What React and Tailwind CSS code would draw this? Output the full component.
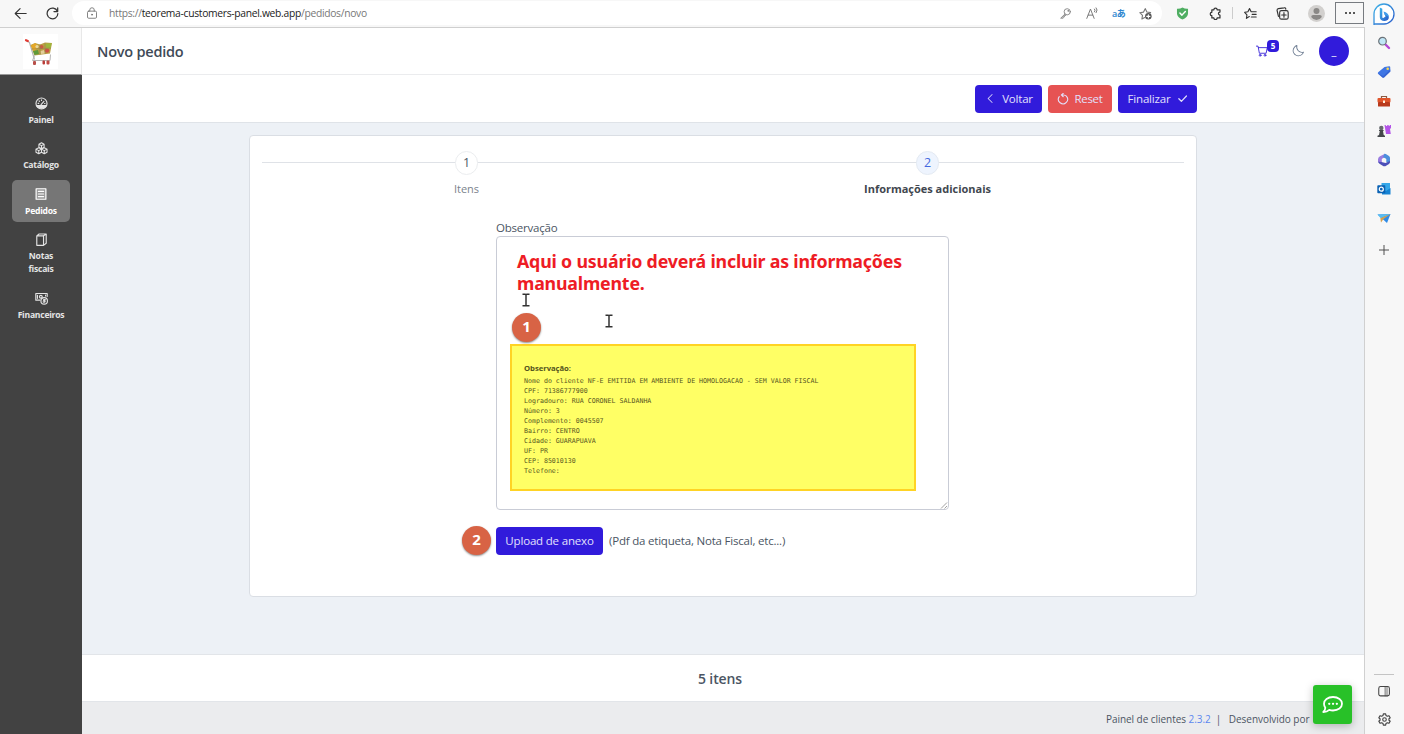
import React from "react";
import { PiMoon, PiCaretLeft } from "react-icons/pi";

const S = ({ size = 14, box = 16, sw = 1.2, className = "", children }) => (
  <svg width={size} height={size} viewBox={`0 0 ${box} ${box}`} fill="none" stroke="currentColor" strokeWidth={sw} strokeLinecap="round" strokeLinejoin="round" className={`shrink-0 ${className}`}>
    {children}
  </svg>
);

const BackIcon = () => <S size={13} sw={1.4}><path d="M15 8H1.5M7.5 2 1.5 8l6 6" /></S>;
const ReloadIcon = () => <S size={13} sw={1.5}><path d="M14 5.2A6.6 6.6 0 1 0 14.6 8M14.4 1v4.6H9.8" /></S>;
const LockIcon = () => <S size={12} sw={1.2}><rect x="2" y="5.5" width="12" height="9.5" rx="1.6" /><path d="M5 5.500V4a3 3 0 0 1 6 0v1.500" /><circle cx="8" cy="10.200" r=".7" fill="currentColor" /></S>;
const KeyIcon = () => <S size={11}><circle cx="10.500" cy="5.500" r="4.500" /><path d="M7.200 8.700 1 14.800h3.500v-2h2v-2h1.800" /><circle cx="11.800" cy="4.200" r=".6" /></S>;
const ReadIcon = () => <S size={13}><path d="M1 14 5.500 2.500 10 14M2.700 10h5.600M10.500 2.500q1.500 1.500 0 3.500M12.500 1q2.500 2.500 0 6" /></S>;
const StarAddIcon = () => <S size={13} sw={1.4}><path d="M7 13 3.600 14.800l.7-4.500L1 7l4.600-.7L7.700 2l2 4.200 4.600.7" /><circle cx="11.500" cy="11.500" r="4" fill="#555" stroke="none" /><path d="M11.500 9.500v4M9.500 11.500h4" stroke="#fff" /></S>;
const ShieldIcon = () => <S size={13} sw={1.8}><path d="M8 .5Q11 2.300 14.800 2v5.500c0 4-3 6.500-6.800 8-3.800-1.500-6.800-4-6.800-8V2Q5 2.300 8 .5z" fill="#4fae62" stroke="none" /><path d="m4.800 7.500 2.500 2.500 4.200-4.500" stroke="#fff" /></S>;
const PuzzleIcon = () => <S size={13} sw={1.500}><path d="M3.500 3.500H6a2 2 0 0 1 4 0h3.500V6.200a1.900 1.900 0 0 0 0 3.800v3.500H10a2 2 0 0 1-4 0H3.500V10.500a2 2 0 0 1 0-4z" /></S>;
const FavIcon = () => <S size={13} sw={1.4}><path d="M6.500 11.800 3 14l.6-4.300L.8 6.600l4-.7L6.800 2l2 3.900H15M10 9h5M9 12.300h6" /></S>;
const CollectIcon = () => <S size={13} sw={1.4}><path d="M3 11.500 1.300 4A2 2 0 0 1 3 2l7-1a1.500 1.500 0 0 1 2 1.600" /><rect x="4.500" y="4.500" width="10.500" height="10.500" rx="2.200" /><path d="M9.800 7v5.500M7 9.800h5.500" /></S>;
const ResetIcon = () => <S size={12} sw={1.4}><path d="M3 4.800A6.100 6.100 0 1 0 12.500 4.200Q11 2.800 8.800 2.600H5.800M8.300.6 5.800 2.600l2.500 2.400" /></S>;

const Bing = () => (
  <svg width="22" height="23" viewBox="0 0 22 23" className="shrink-0">
    <defs>
      <linearGradient id="bg1" x1="0" y1="0" x2="1" y2="1"><stop offset="0" stopColor="#3fb4e8" /><stop offset="1" stopColor="#2859c9" /></linearGradient>
    </defs>
    <path d="M1 22V11a10 10 0 1 1 10 10H1z" fill="#fff" stroke="url(#bg1)" strokeWidth="1.300" />
    <path d="M6.800 4.500 9.300 5.700V14q0 1.600 1.400.8l1.800-1.200-1-2.800q3.800.5 4.300 3.200.3 3.500-4 4-4.500.2-5-3.800z" fill="url(#bg1)" />
    <path d="M10.500 8.500q5 1.200 5.500 5.500-2.500-2-4.500-2.300z" fill="#3f9bea" />
  </svg>
);

const SideIcons = [
  <svg width="14" height="14" viewBox="0 0 14 14"><path d="m8.500 8.500 3.500 3.500" stroke="#b348d6" strokeWidth="2.400" strokeLinecap="round" /><circle cx="5.500" cy="5.200" r="3.800" fill="#bfe6f7" stroke="#6b7278" strokeWidth="1.200" /></svg>,
  <svg width="14" height="14" viewBox="0 0 14 14"><path d="M7.500 2 12.300 1.200q.9 0 .9.900l.2 4.400-6.300 6q-.9.700-1.700 0L1 8.800q-.5-.8.200-1.500z" fill="#3f76e4" /><path d="m1 8.500 4.500 4q.8.700 1.600 0l6.300-6-.1-2L6.200 11z" fill="#2b52c4" opacity=".5" /><circle cx="10.700" cy="3.800" r="1.300" fill="#ffd94a" /></svg>,
  <svg width="14" height="14" viewBox="0 0 14 14"><path d="M4.500 4.500V2.500h5v2" fill="none" stroke="#8d5a42" strokeWidth="1.200" /><rect x=".5" y="4" width="13" height="4.500" rx="1" fill="#e0552b" /><rect x="1" y="8" width="12" height="4.500" rx=".6" fill="#b93a1c" /><rect x="6" y="6.500" width="2" height="2.500" fill="#fff1dd" /></svg>,
  <svg width="14" height="14" viewBox="0 0 14 14"><path d="M7.500 1h1.300v1h1.400V1h1.500v1h1V1H14v3l-1 1 .8 5H9z" fill="#b455e8" /><circle cx="4.300" cy="4" r="2.200" fill="#66696d" /><path d="M2 6h4.600v1H6l.7 4 1.300.8V13H.5v-1.200L2 11l.8-4H2z" fill="#45484b" /></svg>,
  <svg width="14" height="14" viewBox="0 0 14 14"><path d="M8 .7 3 3.300a3.500 3.500 0 0 0-2 3V9l3.800.500V6l4.200-2.500z" fill="#9a7ce0" /><path d="M7.500 .7q1.500 0 2.500 1l2 1.300q1 .8 1 2v4.500l-3.700-.300V6L6 4z" fill="#4b8fdc" /><path d="m1 8.800q.3 1.200 1.500 2l4 2.500q1.500.3 3-.8l2.500-1.500q1.300-1 1-3L8.500 10 4.500 9z" fill="#4c4fb8" /><circle cx="7" cy="7.200" r="1.900" fill="#f7f7f7" /></svg>,
  <svg width="14" height="14" viewBox="0 0 14 14"><rect x="4.500" y="1" width="8.500" height="8" fill="#35a7e8" /><path d="M5 6.500 9 9l4.500-3v6.500H5z" fill="#1683d4" /><rect x=".3" y="3.200" width="8" height="8" rx=".8" fill="#0a62b4" /><circle cx="4.300" cy="7.200" r="2" fill="none" stroke="#fff" strokeWidth="1.200" /></svg>,
  <svg width="14" height="14" viewBox="0 0 14 14"><path d="M.5 3.500 13.500 3l-3.500 9-3.300-3z" fill="#2f8be6" /><path d="M.5 3.500 13.500 3 3.800 7.200z" fill="#57bdf2" /><path d="M13.500 3 3.300 7.200l.7 4.300L6.500 8z" fill="#d9a04a" /></svg>,
];

const CartLogo = () => (
  <svg width="35" height="35" viewBox="0 0 35 35" className="bg-white">
    <path d="M3 6.500 6.500 8.500 11.500 25.500" fill="none" stroke="#b5b5b5" strokeWidth="1.200" />
    <path d="M3 6.200 4.800 7" stroke="#e23a32" strokeWidth="2.200" strokeLinecap="round" />
    <path d="M7.500 11 12 9l5 1.500 5-2 7 .5-2 10.500-15.500 2z" fill="#bba045" />
    <path d="m8 11.500 4.500-2.500 3 4-5 4.500z" fill="#e6a828" /><path d="m10 17 5-1 1 4-4.500 1z" fill="#5f9a3a" />
    <circle cx="18.500" cy="13" r="2" fill="#cb5a42" /><circle cx="24" cy="16.500" r="2.200" fill="#cd5146" /><circle cx="14" cy="12.500" r="1.600" fill="#e9d9a0" />
    <path d="m22 10 6.500-1-.8 5-4 .5z" fill="#9db83c" /><path d="m17.500 17 3.500-1 1 3.500-4 .5z" fill="#e2cf9a" />
    <path d="M17 10v11M22 9v11M8.500 15l19.500-1" stroke="#8f8050" strokeWidth=".5" />
    <path d="M11.500 21.500 9.500 26.500H27l.500-6" fill="none" stroke="#b5b5b5" strokeWidth="1" />
    <rect x="10" y="27" width="3" height="4" rx="1" fill="#b8504a" /><rect x="19.500" y="26.500" width="2.500" height="4" rx="1" fill="#b83a36" /><rect x="23.500" y="26.500" width="3" height="4" rx="1" fill="#c24a44" />
  </svg>
);

const PanelIcon = () => (
  <S size={13} sw={1.4}><circle cx="8" cy="8" r="6.800" /><path d="M2 10.500h12a7 7 0 0 1-12 0z" fill="currentColor" /><path d="m7.500 9.500 3.500-4M3.800 7.800h.8M5 4.800l.5.600M8 3.500v.8M11.800 8h.5" /></S>
);
const CatalogIcon = () => (
  <S size={13} sw={1.300}><path d="M8 1 11.200 2.800v3.700L8 8.300 4.800 6.500V2.800zM4.800 2.800 8 4.500l3.200-1.700M8 4.500v3.800M4.600 7 8 8.800v3.800l-3.400 1.900-3.400-1.900V8.800zM1.200 8.800l3.400 1.800L8 8.800M4.600 10.600v3.900M11.400 7l3.400 1.800v3.800l-3.400 1.900L8 12.600V8.800zM8 8.800l3.400 1.800 3.400-1.800M11.400 10.600v3.900" /></S>
);
const OrdersIcon = () => (
  <S size={12} sw={1.600}><rect x="1.500" y="1" width="13" height="14" fill="currentColor" fillOpacity=".25" /><path d="M4.500 4.500h7M4.500 8h7M4.500 11.500h7" /></S>
);
const NotesIcon = () => (
  <S size={13} sw={1.400}><path d="M2.200 3.500h8.300v11.700H2.200zM2.200 3.500 5 1.200h8.800L10.500 3.500M13.800 1.200v11.500l-3.300 2.500" /></S>
);
const FinanceIcon = () => (
  <S size={13} sw={1.400}><path d="M6 10H1V1.800h14v3.700" /><path d="M3 4v3.800M13 3.800v1" /><circle cx="7.200" cy="5.800" r="1.700" /><circle cx="11.300" cy="11" r="4" /><path d="M12.800 9.600q-1.300-.8-2.300 0c-.6 1 2.200 1 2 2.200-.4 1-1.800.8-2.500.2" /></S>
);

const nav = [
  { icon: <PanelIcon />, label: "Painel" },
  { icon: <CatalogIcon />, label: "Catálogo" },
  { icon: <OrdersIcon />, label: "Pedidos", active: true },
  { icon: <NotesIcon />, label: "Notas fiscais", tall: true },
  { icon: <FinanceIcon />, label: "Financeiros" },
];

const note = [
  "Nome do cliente NF-E EMITIDA EM AMBIENTE DE HOMOLOGACAO - SEM VALOR FISCAL",
  "CPF: 71386777900", "Logradouro: RUA CORONEL SALDANHA", "Número: 3", "Complemento: 0045507",
  "Bairro: CENTRO", "Cidade: GUARAPUAVA", "UF: PR", "CEP: 85010130", "Telefone:",
];

const IBeam = () => (
  <svg width="8" height="14" viewBox="0 0 8 14"><path d="M.5 1.200h2.700l.8.600.8-.6h2.700M.5 12.800h2.700l.8-.6.8.600h2.700M4 2v10" fill="none" stroke="#333" strokeWidth="1.500" /></svg>
);

const Badge = ({ children }) => (
  <div className="flex h-[29px] w-[29px] items-center justify-center rounded-full bg-[#d86345] pb-0.5 text-[15px] font-bold text-white shadow-[0_1px_2px_rgba(0,0,0,0.45)]">{children}</div>
);

function BrowserBar() {
  return (
    <div className="flex h-7 shrink-0 items-center border-b border-[#cfcfcf] bg-[#f7f7f7] pb-px text-[#333]">
      <div className="flex w-[72px] items-center gap-[19px] pl-[14px]"><BackIcon /><ReloadIcon /></div>
      <div className="flex h-6 w-[1090px] items-center rounded-full bg-white pr-[10px] pl-[14px] text-[#777]">
        <LockIcon />
        <span className="ml-[11px] pt-0.5 text-[10.300px] tracking-[-0.300px] whitespace-nowrap">https://<span className="text-[#1b1b1b]">teorema-customers-panel.web.app</span>/pedidos/novo</span>
        <div className="ml-auto flex items-center">
          <KeyIcon />
          <div className="ml-[15px] flex"><ReadIcon /></div>
          <span className="ml-[13px] w-[14px] text-[9px] leading-none font-semibold tracking-[-0.500px] whitespace-nowrap text-[#2e86cf]">aあ</span>
          <div className="ml-[13px] flex"><StarAddIcon /></div>
        </div>
      </div>
      <div className="ml-[14px] flex items-center">
        <ShieldIcon />
        <div className="ml-[20px] flex"><PuzzleIcon /></div>
        <div className="ml-[10px] h-3 w-px bg-[#ccc]" />
        <div className="ml-[11px] flex"><FavIcon /></div>
        <div className="ml-[19px] flex"><CollectIcon /></div>
        <svg className="ml-[19px]" width="17" height="17" viewBox="0 0 17 17"><circle cx="8.500" cy="8.500" r="8.500" fill="#d2d0ce" /><circle cx="8.500" cy="6" r="3" fill="#8a8886" /><path d="M3.200 12q0-2 2-2h6.600q2 0 2 2-2 3-5.300 3t-5.300-3z" fill="#8a8886" /></svg>
        <div className="ml-[10px] flex h-[22px] w-[29px] items-center justify-center gap-0.5 border border-[#777b80]">
          <i className="h-0.5 w-0.5 rounded-full bg-[#222]" /><i className="h-0.5 w-0.5 rounded-full bg-[#222]" /><i className="h-0.5 w-0.5 rounded-full bg-[#222]" />
        </div>
      </div>
    </div>
  );
}

export default function App() {
  return (
    <div className="flex h-[734px] w-[1404px] overflow-hidden bg-[#f7f7f7] font-['Open_Sans','Noto_Sans','Noto_Sans_CJK_JP',sans-serif] text-[#4b5563]">
      <div className="flex w-[1365px] flex-col">
        <BrowserBar />
        <div className="flex min-h-0 flex-1 border-r border-[#d0d0d0]">
          <aside className="flex w-[82px] shrink-0 flex-col bg-[#424242]">
            <div className="flex h-[47px] items-center justify-center border-r border-b border-r-[#e8e8e8] border-b-[#999] bg-[#fafafa]"><CartLogo /></div>
            <nav className="flex flex-col items-center gap-[3.400px] pt-[14px] text-[#e4e4e4]">
              {nav.map((n) => (
                <div key={n.label} className={`flex w-[58px] flex-col items-center rounded-[5px] pt-2 ${n.tall ? "h-[55px]" : "h-[42px]"} ${n.active ? "bg-[#767676] text-white" : ""}`}>
                  <div className="flex h-[13px] items-center">{n.icon}</div>
                  <span className={`mt-1 text-center text-[8.600px] leading-[13px] font-bold tracking-[-0.250px] ${n.tall ? "w-8" : "whitespace-nowrap"}`}>{n.label}</span>
                </div>
              ))}
            </nav>
          </aside>
          <main className="flex min-w-0 flex-1 flex-col bg-[#edf1f6]">
            <header className="flex h-[47px] shrink-0 items-center border-b border-[#ebecee] bg-white pr-[15px] pl-[15px]">
              <h1 className="pt-0.5 text-[14.500px] font-semibold tracking-[-0.220px] text-[#3f4a57]">Novo pedido</h1>
              <div className="ml-auto flex items-center">
                <div className="relative flex text-[#3a26d8]">
                  <S size={12} sw={1.200}><path d="M.5 1.500h2.200L4.500 11h9L15 3.500H3.200" /><circle cx="5.500" cy="13.700" r="1.200" /><circle cx="12" cy="13.700" r="1.200" /></S>
                  <span className="absolute -top-[5px] left-[11px] flex h-3 w-3 items-center justify-center rounded-[4px] bg-[#311bdb] text-[8px] font-bold text-white">5</span>
                </div>
                <PiMoon className="ml-[23px] text-[14px] text-[#64748b]" />
                <div className="ml-[14px] flex h-[30px] w-[30px] items-center justify-center rounded-full bg-[#311bdb] text-[11px] text-white">_</div>
              </div>
            </header>
            <div className="flex h-12 shrink-0 items-center justify-end gap-1.5 border-b border-[#dfe3e8] bg-white pr-[167px] text-[11.500px] text-[#e2e0fb]">
              <button className="flex h-7 w-[67px] items-center justify-center gap-[5px] rounded-[4px] bg-[#311bdb]"><PiCaretLeft className="text-[13px]" /><span className="tracking-[-0.200px]">Voltar</span></button>
              <button className="flex h-7 w-16 items-center justify-center gap-[5px] rounded-[4px] bg-[#e65353]"><ResetIcon /><span className="tracking-[-0.300px]">Reset</span></button>
              <button className="flex h-7 w-[79px] items-center justify-center gap-2 rounded-[4px] bg-[#311bdb]"><span className="tracking-[-0.200px]">Finalizar</span><S size={9} sw={2.200}><path d="M1.500 8.500 6 13l9-9.500" /></S></button>
            </div>
            <div className="flex min-h-0 flex-1 flex-col pt-3 pl-[167px]">
              <section className="h-[462px] w-[948px] rounded-[4px] border border-[#dadee4] bg-white pr-3 pl-3">
                <div className="relative grid grid-cols-[409px_1fr] pt-[15px]">
                  <div className="absolute top-[26px] right-0 left-0 h-px bg-[#dfe2e7]" />
                  <div className="relative flex flex-col items-center">
                    <div className="flex h-6 w-[23px] items-center justify-center rounded-full border border-[#ebedef] bg-white text-[12.500px]">1</div>
                    <span className="mt-1.5 text-[11px] leading-4 text-[#7b838d]">Itens</span>
                  </div>
                  <div className="relative flex flex-col items-center">
                    <div className="flex h-6 w-[23px] items-center justify-center rounded-full border border-[#e4eaf2] bg-[#eef4fe] text-[12.500px] text-[#4568e0]">2</div>
                    <span className="mt-1.5 text-[11px] leading-4 font-bold tracking-[-0.010px] text-[#41474f]">Informações adicionais</span>
                  </div>
                </div>
                <div className="ml-[234px] w-[453px] pt-[22px]">
                  <label className="block text-[11.500px] leading-[17px] tracking-[-0.220px]">Observação</label>
                  <div className="relative h-[274px] rounded-[4px] border border-[#c9ccd6] bg-white pt-[14px] pl-[13px]">
                    <p className="ml-[7px] font-['Noto_Sans',sans-serif] text-[17.800px] leading-[21.500px] font-bold tracking-[-0.190px] whitespace-nowrap text-[#ee1c25]">Aqui o usuário deverá incluir as informações<br />manualmente.</p>
                    <div className="absolute top-[56px] left-[25px]"><IBeam /></div>
                    <div className="absolute top-[77px] left-[108px]"><IBeam /></div>
                    <div className="absolute top-[76px] left-[15px]"><Badge>1</Badge></div>
                    <div className="mt-[50px] h-[147px] w-[406px] border-2 border-[#ffd324] bg-[#ffff65] pt-[14px] pl-3 text-[#55551f]">
                      <div className="text-[7.700px] leading-[16px] font-bold tracking-[-0.040px]">Observação:</div>
                      <div className="font-['DejaVu_Sans_Mono','Liberation_Mono',monospace] text-[6.610px] leading-[10px] whitespace-pre">
                        {note.map((l) => <div key={l}>{l}</div>)}
                      </div>
                    </div>
                    <svg className="absolute right-0 bottom-0" width="8" height="8" viewBox="0 0 8 8"><path d="M1 7.500 7 1.500M4.500 7.500 7 5" stroke="#888" strokeWidth=".8" /></svg>
                  </div>
                  <div className="relative mt-[17px] flex items-center gap-1.5">
                    <div className="absolute top-[-1px] -left-[34px]"><Badge>2</Badge></div>
                    <button className="h-7 w-[107px] rounded-[4px] bg-[#311bdb] text-[11.500px] tracking-[-0.180px] whitespace-nowrap text-[#e2e0fb]">Upload de anexo</button>
                    <span className="text-[11.500px] tracking-[-0.200px] whitespace-nowrap">(Pdf da etiqueta, Nota Fiscal, etc...)</span>
                  </div>
                </div>
              </section>
            </div>
            <div className="flex h-12 shrink-0 items-center justify-center border-y border-[#e2e5e9] bg-white pr-1.5 text-[14px] font-semibold tracking-[-0.100px] text-[#4b5563]">5 itens</div>
            <footer className="relative flex h-8 shrink-0 items-center bg-[#ebecee] pt-[3px] pl-[1024px] text-[10px]">
              <span className="tracking-[-0.050px] whitespace-pre">Painel de clientes <span className="text-[#5b87ee]">2.3.2</span>{"  |   "}Desenvolvido por</span>
              <div className="absolute right-[12px] bottom-[10px] flex h-[39px] w-[39px] items-center justify-center rounded-[3px] bg-[#28c128] text-white shadow-[0_2px_8px_rgba(0,0,0,0.25)]">
                <svg width="21" height="18" viewBox="0 0 21 18" fill="none" stroke="#fff" strokeWidth="1.800" strokeLinejoin="round"><path d="M11 1c5.300 0 9 3 9 6.800s-3.700 6.700-9 6.700q-2 0-3.700-.6Q5 16 1.300 16q2-2 2-4.300Q2 10 2 7.800C2 4 5.700 1 11 1z" /><path d="M7.200 7.800h.1M11 7.800h.1M14.800 7.800h.1" strokeWidth="2.200" strokeLinecap="round" /></svg>
              </div>
            </footer>
          </main>
        </div>
      </div>
      <aside className="flex w-[39px] flex-col items-center pt-[3px] pr-px text-[#444]">
        <Bing />
        <div className="mt-[10px] flex flex-col gap-[15.200px]">{SideIcons.map((ic, i) => <div key={i} className="h-[14px]">{ic}</div>)}</div>
        <div className="mt-[20px]"><S size={10} sw={1.500}><path d="M8 .5v15M.5 8h15" /></S></div>
        <div className="mt-auto h-px w-5 bg-[#c4c4c4]" />
        <div className="mt-[10px]"><S size={12} sw={1.400}><rect x="1" y="2" width="14.200" height="12.500" rx="2.500" /><path d="M9.500 2v12.500M12 2v12.500" strokeWidth="1" /></S></div>
        <div className="mt-4 mb-2"><S size={13} sw={1.400}><path d="m6.600 1-.4 2-1.700 1-2-.7L1 5.800l1.500 1.300v1.800L1 10.200l1.500 2.500 2-.7 1.700 1 .4 2h2.800l.4-2 1.700-1 2 .7 1.500-2.500-1.500-1.300V7.100L15 5.800l-1.500-2.500-2 .7-1.700-1-.4-2z" /><circle cx="8" cy="8" r="2.200" /></S></div>
      </aside>
    </div>
  );
}
